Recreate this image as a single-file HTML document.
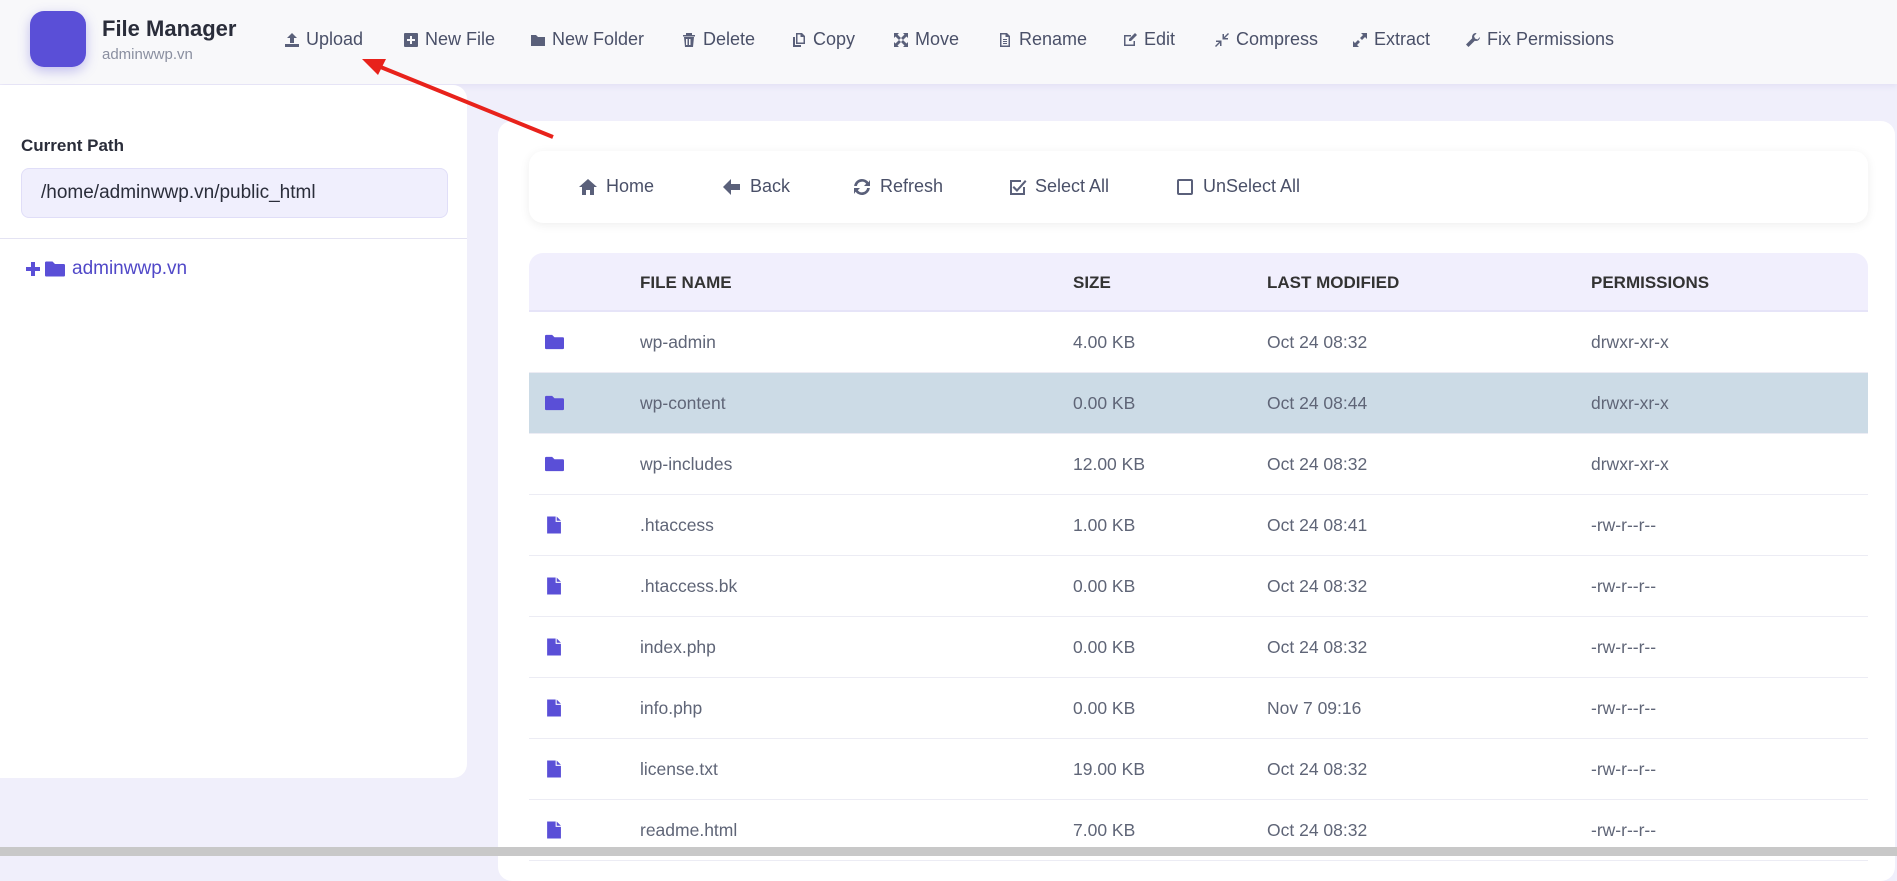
<!DOCTYPE html>
<html><head><meta charset="utf-8"><style>
*{box-sizing:border-box;margin:0;padding:0}
body{width:1897px;height:856px;overflow:hidden;background:#f0effb;font-family:"Liberation Sans",sans-serif;position:relative}
.hdr{position:absolute;left:0;top:0;width:1897px;height:84px;background:#f8f8fa;box-shadow:0 2px 6px rgba(120,110,200,.12)}
.logo{position:absolute;left:30px;top:11px;width:56px;height:56px;border-radius:14px;background:#5a4fd7;box-shadow:0 4px 12px rgba(90,79,215,.35)}
.t1{position:absolute;left:102px;top:16px;font-size:22px;font-weight:bold;color:#2a2d3a}
.t2{position:absolute;left:102px;top:46px;font-size:15px;color:#8a8fa0}
.mi{position:absolute;top:29px;font-size:18px;color:#4a5068;display:flex;align-items:center;gap:6px;white-space:nowrap}
.mi svg{width:16px;height:16px;fill:#5a607a}
.side{position:absolute;left:0;top:85px;width:467px;height:693px;background:#fff;border-radius:0 14px 14px 0}
.cp{position:absolute;left:21px;top:136px;font-size:17px;font-weight:bold;color:#2a2d3a}
.path{position:absolute;left:21px;top:168px;width:427px;height:50px;background:#f0effd;border:1px solid #e0def8;border-radius:8px;font-size:19px;color:#2a2d3a;padding:13px 0 0 19px}
.div{position:absolute;left:0;top:238px;width:467px;height:1px;background:#e4e3f3}
.tree{position:absolute;left:25px;top:258px;font-size:19px;color:#5048c8;display:flex;align-items:center;gap:4px}
.main{position:absolute;left:498px;top:121px;width:1397px;height:760px;background:#fff;border-radius:14px}
.tb{position:absolute;left:529px;top:151px;width:1339px;height:72px;background:#fff;border-radius:14px;box-shadow:0 2px 10px rgba(0,0,0,.07)}
.bt{position:absolute;top:176px;font-size:18px;color:#4a5068;display:flex;align-items:center;gap:8px}
.bt svg{width:20px;height:20px;fill:#5a607a}
.th{position:absolute;left:529px;top:253px;width:1339px;height:59px;background:#f1effd;border-radius:14px 14px 0 0;border-bottom:2px solid #e6e4f8}
.th span{position:absolute;top:20px;font-size:17px;font-weight:bold;color:#333}
.row{position:absolute;left:529px;width:1339px;height:61px;border-bottom:1px solid #ececf4;font-size:17.5px;color:#5f6577}
.row span{position:absolute;top:20px}
.row svg{position:absolute;left:16px;top:21px;width:19px;height:18px;fill:#5a4fd7}
.sel{background:#ccdbe6}
.sb{position:absolute;left:0;top:847px;width:1897px;height:9px;background:#c8c8c8}
</style></head><body>
<div class="hdr">
<div class="logo"></div>
<div class="t1">File Manager</div><div class="t2">adminwwp.vn</div>
<div class="mi" style="left:284px"><svg viewBox="0 0 16 16"><path d="M8 1l5 5H10v5H6V6H3z M1 12h14v3H1z"/></svg>Upload</div>
<div class="mi" style="left:403px"><svg viewBox="0 0 16 16"><path d="M2 1h12a1 1 0 011 1v12a1 1 0 01-1 1H2a1 1 0 01-1-1V2a1 1 0 011-1zm5 3v3H4v2h3v3h2V9h3V7H9V4z"/></svg>New File</div>
<div class="mi" style="left:530px"><svg viewBox="0 0 16 16"><path d="M1 3h5l2 2h7v9H1z"/></svg>New Folder</div>
<div class="mi" style="left:681px"><svg viewBox="0 0 16 16"><path d="M5 1h6v2h3v1.5H2V3h3zM3 5h10l-1 10H4zm2 2v6h1.5V7zm3 0v6h1.5V7z" /></svg>Delete</div>
<div class="mi" style="left:791px"><svg viewBox="0 0 16 16"><path d="M5 1h6l3 3v8H5zm1.5 1.5v8h6V5h-3V2.5zM2 5h2v8h6v2H2z"/></svg>Copy</div>
<div class="mi" style="left:893px"><svg viewBox="0 0 16 16"><path d="M1 1h5L4.5 2.5 8 6l-2 2-3.5-3.5L1 6zm14 0v5l-1.5-1.5L10 8 8 6l3.5-3.5L10 1zM1 15v-5l1.5 1.5L6 8l2 2-3.5 3.5L6 15zm14 0h-5l1.5-1.5L8 10l2-2 3.5 3.5L15 10z"/></svg>Move</div>
<div class="mi" style="left:997px"><svg viewBox="0 0 16 16"><path d="M3 1h7l3 3v11H3zm1.5 1.5v11h7V5h-3V2.5zM6 7h4v1H6zm0 2h4v1H6zm0 2h4v1H6z"/></svg>Rename</div>
<div class="mi" style="left:1122px"><svg viewBox="0 0 16 16"><path d="M2 3h7v1.5H3.5v8h8V9H13v5H2zm11-2l2 2-6 6H7V7z"/></svg>Edit</div>
<div class="mi" style="left:1214px"><svg viewBox="0 0 16 16"><path d="M15 2l-4 4h3v1.5H8.5V2H10v3l4-4zM1 14l4-4H2V8.5h5.5V14H6v-3l-4 4z"/></svg>Compress</div>
<div class="mi" style="left:1352px"><svg viewBox="0 0 16 16"><path d="M9 1h6v6l-2-2-3 3-2-2 3-3zM7 15H1V9l2 2 3-3 2 2-3 3z"/></svg>Extract</div>
<div class="mi" style="left:1465px"><svg viewBox="0 0 16 16"><path d="M11 1a4 4 0 00-3.8 5.2L1 12.5 3.5 15l6.3-6.2A4 4 0 0015 5l-2.5 2.5L10 6.5 9 4l2.5-2.5z"/></svg>Fix Permissions</div>
</div>
<div class="side">
</div>
<div class="cp">Current Path</div>
<div class="path">/home/adminwwp.vn/public_html</div>
<div class="div"></div>
<div class="tree"><svg width="16" height="16" viewBox="0 0 16 16" fill="#5a4fd7"><path d="M6 1h4v5h5v4h-5v5H6v-5H1V6h5z"/></svg><svg width="20" height="18" viewBox="0 0 16 14" fill="#5a4fd7"><path d="M0 2a1 1 0 011-1h5l2 2h7a1 1 0 011 1v8a1 1 0 01-1 1H1a1 1 0 01-1-1z"/></svg><span style="margin-left:3px">adminwwp.vn</span></div>
<div class="main"></div>
<div class="tb"></div>
<div class="bt" style="left:578px"><svg viewBox="0 0 20 20"><path d="M10 2l9 8h-3v8h-4v-5H8v5H4v-8H1z"/></svg>Home</div>
<div class="bt" style="left:722px"><svg viewBox="0 0 20 20"><path d="M9 2v5h9v6H9v5L1 10z"/></svg>Back</div>
<div class="bt" style="left:852px"><svg viewBox="0 0 20 20"><path d="M10 2a8 8 0 016.5 3.3L18 3v6h-6l2.2-2.2A5.2 5.2 0 004.9 9H2.1A8 8 0 0110 2zM2 11h6l-2.2 2.2A5.2 5.2 0 0015.1 11h2.8A8 8 0 013.5 14.7L2 17z"/></svg>Refresh</div>
<div class="bt" style="left:1007px"><svg viewBox="0 0 20 20"><path d="M3 3h11v2H5v11h11v-6h2v8H3z M7 9l3 3 8-9 1.5 1.5L10 15 5.5 10.5z"/></svg>Select All</div>
<div class="bt" style="left:1175px"><svg viewBox="0 0 20 20"><path d="M4 2h12a2 2 0 012 2v12a2 2 0 01-2 2H4a2 2 0 01-2-2V4a2 2 0 012-2zm0 2v12h12V4z"/></svg>UnSelect All</div>
<div class="th"><span style="left:111px">FILE NAME</span><span style="left:544px">SIZE</span><span style="left:738px">LAST MODIFIED</span><span style="left:1062px">PERMISSIONS</span></div>

<div class="row" style="top:312px"><svg viewBox="0 0 16 14"><path d="M0 2a1 1 0 011-1h5l2 2h7a1 1 0 011 1v8a1 1 0 01-1 1H1a1 1 0 01-1-1z"/></svg><span style="left:111px">wp-admin</span><span style="left:544px">4.00 KB</span><span style="left:738px">Oct 24 08:32</span><span style="left:1062px">drwxr-xr-x</span></div>
<div class="row sel" style="top:373px"><svg viewBox="0 0 16 14"><path d="M0 2a1 1 0 011-1h5l2 2h7a1 1 0 011 1v8a1 1 0 01-1 1H1a1 1 0 01-1-1z"/></svg><span style="left:111px">wp-content</span><span style="left:544px">0.00 KB</span><span style="left:738px">Oct 24 08:44</span><span style="left:1062px">drwxr-xr-x</span></div>
<div class="row" style="top:434px"><svg viewBox="0 0 16 14"><path d="M0 2a1 1 0 011-1h5l2 2h7a1 1 0 011 1v8a1 1 0 01-1 1H1a1 1 0 01-1-1z"/></svg><span style="left:111px">wp-includes</span><span style="left:544px">12.00 KB</span><span style="left:738px">Oct 24 08:32</span><span style="left:1062px">drwxr-xr-x</span></div>
<div class="row" style="top:495px"><svg viewBox="0 0 16 16" style="width:17px;height:20px;top:20px"><path d="M2 0h8v5h5v11H2zM11 0l4 4h-4z"/></svg><span style="left:111px">.htaccess</span><span style="left:544px">1.00 KB</span><span style="left:738px">Oct 24 08:41</span><span style="left:1062px">-rw-r--r--</span></div>
<div class="row" style="top:556px"><svg viewBox="0 0 16 16" style="width:17px;height:20px;top:20px"><path d="M2 0h8v5h5v11H2zM11 0l4 4h-4z"/></svg><span style="left:111px">.htaccess.bk</span><span style="left:544px">0.00 KB</span><span style="left:738px">Oct 24 08:32</span><span style="left:1062px">-rw-r--r--</span></div>
<div class="row" style="top:617px"><svg viewBox="0 0 16 16" style="width:17px;height:20px;top:20px"><path d="M2 0h8v5h5v11H2zM11 0l4 4h-4z"/></svg><span style="left:111px">index.php</span><span style="left:544px">0.00 KB</span><span style="left:738px">Oct 24 08:32</span><span style="left:1062px">-rw-r--r--</span></div>
<div class="row" style="top:678px"><svg viewBox="0 0 16 16" style="width:17px;height:20px;top:20px"><path d="M2 0h8v5h5v11H2zM11 0l4 4h-4z"/></svg><span style="left:111px">info.php</span><span style="left:544px">0.00 KB</span><span style="left:738px">Nov 7 09:16</span><span style="left:1062px">-rw-r--r--</span></div>
<div class="row" style="top:739px"><svg viewBox="0 0 16 16" style="width:17px;height:20px;top:20px"><path d="M2 0h8v5h5v11H2zM11 0l4 4h-4z"/></svg><span style="left:111px">license.txt</span><span style="left:544px">19.00 KB</span><span style="left:738px">Oct 24 08:32</span><span style="left:1062px">-rw-r--r--</span></div>
<div class="row" style="top:800px"><svg viewBox="0 0 16 16" style="width:17px;height:20px;top:20px"><path d="M2 0h8v5h5v11H2zM11 0l4 4h-4z"/></svg><span style="left:111px">readme.html</span><span style="left:544px">7.00 KB</span><span style="left:738px">Oct 24 08:32</span><span style="left:1062px">-rw-r--r--</span></div>

<svg style="position:absolute;left:0;top:0" width="1897" height="856"><line x1="553" y1="137" x2="378" y2="66" stroke="#e8221b" stroke-width="4"/><path d="M362 59l24 0-8 16z" fill="#e8221b"/></svg>
<div class="sb"></div>
</body></html>
